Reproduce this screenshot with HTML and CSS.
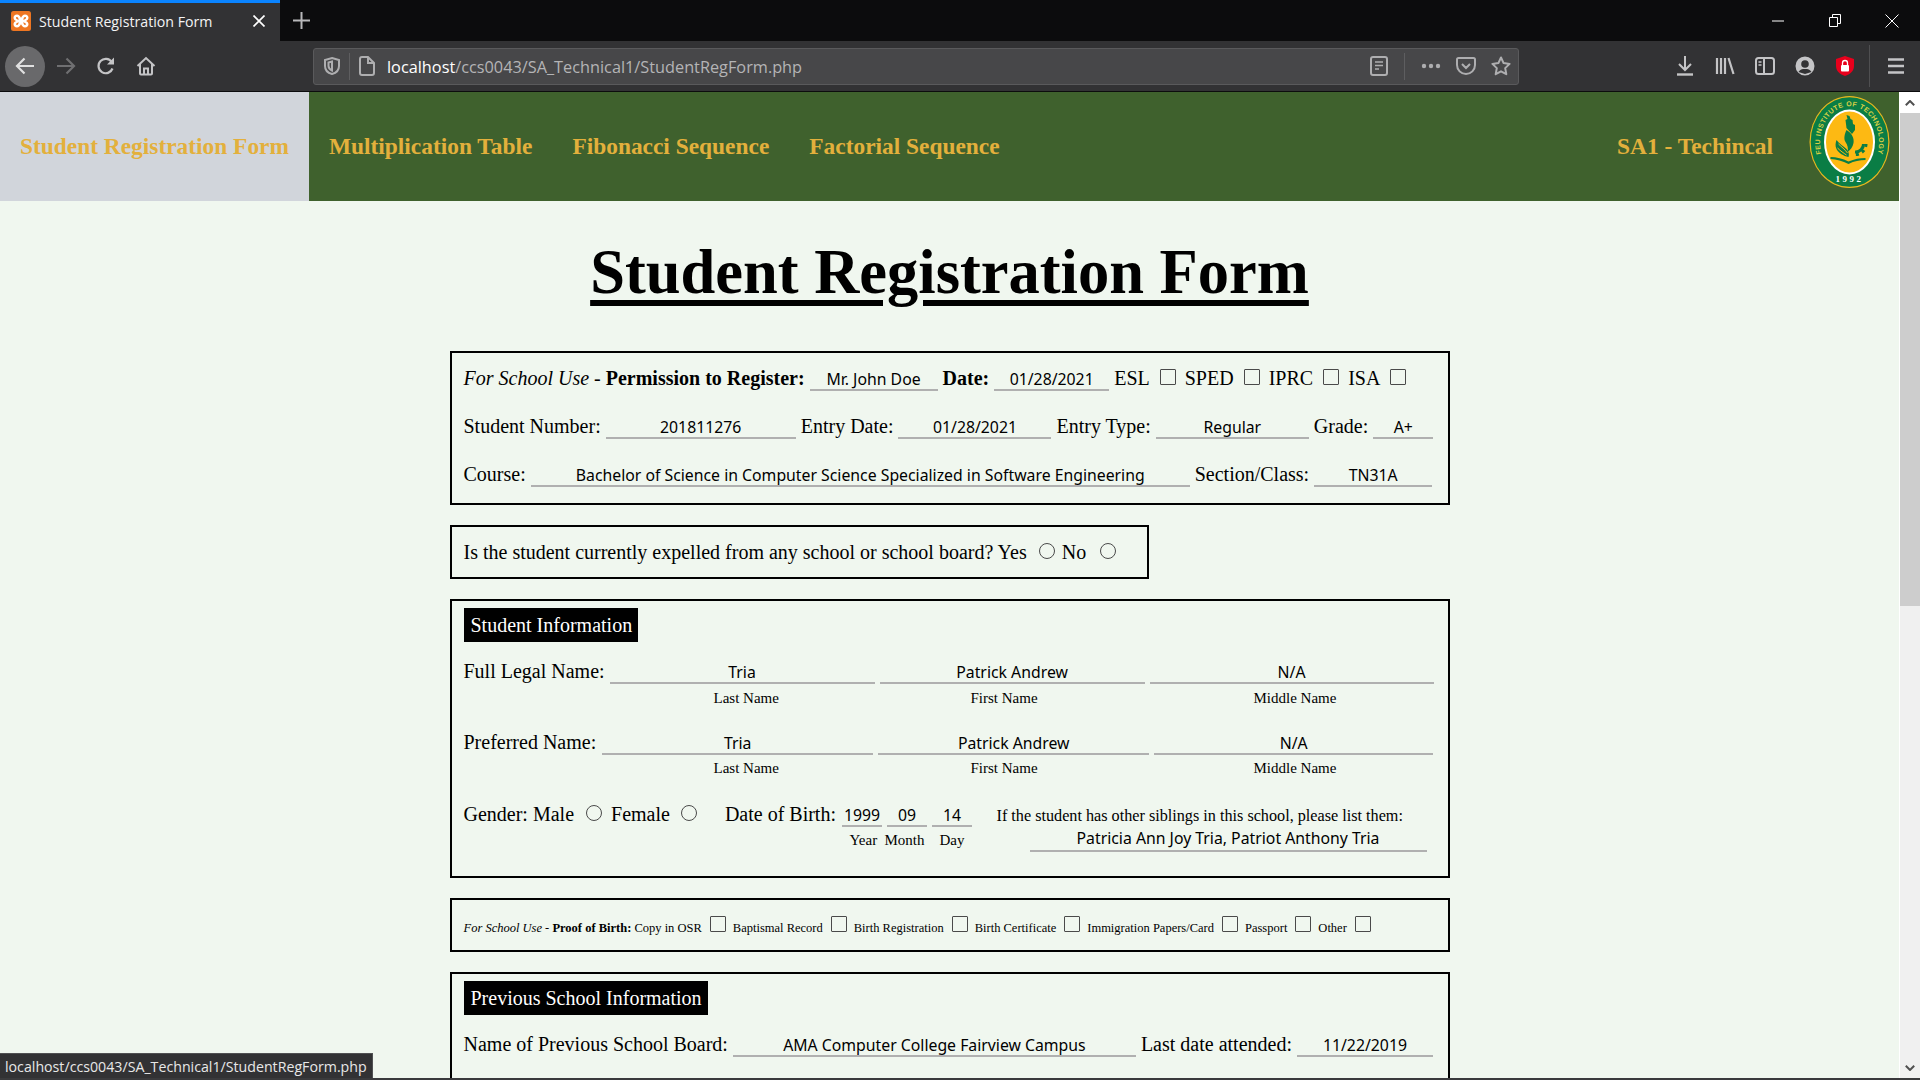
FILE: index.html
```html
<!DOCTYPE html>
<html lang="en">
<head>
<meta charset="utf-8">
<title>Student Registration Form</title>
<link rel="stylesheet" href="styles.css">
</head>
<body>
<header class="chrome">
  <div class="tabstrip">
    <div class="tab">
      <svg class="favicon" viewBox="0 0 20 20"><rect width="20" height="20" rx="2.5" fill="#ee7622"/><path d="M6 3.5c2 0 3 1.5 4 3.2 1-1.7 2-3.2 4-3.2 2.2 0 3.5 1.4 3.5 3.2 0 1.5-1 2.6-2.6 3.3 1.6.7 2.6 1.8 2.6 3.3 0 1.8-1.3 3.2-3.5 3.2-2 0-3-1.5-4-3.2-1 1.7-2 3.2-4 3.2-2.2 0-3.5-1.4-3.5-3.2 0-1.5 1-2.6 2.6-3.3C3.500 9.300 2.500 8.200 2.500 6.700c0-1.800 1.300-3.200 3.500-3.200z" fill="#fff"/><path d="M6 6c-.8 0-1 .5-1 .9 0 .7 1 1.300 2.800 1.900C7.400 7.300 6.900 6 6 6zM14 6c.8 0 1 .5 1 .9 0 .7-1 1.300-2.800 1.900.4-1.500.9-2.800 1.800-2.800zM6 14c-.8 0-1-.5-1-.9 0-.7 1-1.300 2.800-1.900C7.400 12.700 6.900 14 6 14zM14 14c.8 0 1-.5 1-.9 0-.7-1-1.300-2.800-1.900.4 1.500.9 2.800 1.800 2.800z" fill="#ee7622"/></svg>
      <span class="tab-title">Student Registration Form</span>
      <svg class="tab-close" viewBox="0 0 12 12"><path d="M.5.500l11 11M11.500.500l-11 11" stroke="#fff" stroke-width="1.700" fill="none"/></svg>
    </div>
    <svg class="newtab" viewBox="0 0 17 17"><path d="M8.500 0v17M0 8.500h17" stroke="#b8b8ba" stroke-width="2" fill="none"/></svg>
    <div class="winctl">
      <svg class="win-min" viewBox="0 0 12 2"><path d="M0 1h12" stroke="#fff" stroke-width="1"/></svg>
      <svg class="win-max" viewBox="0 0 12 13"><path d="M.5 3.500h8v9h-8zM3.500 3.500v-3h8v9h-3" stroke="#fff" fill="none"/></svg>
      <svg class="win-close" viewBox="0 0 14 14"><path d="M.5.500l13 13M13.500.500l-13 13" stroke="#fff" fill="none"/></svg>
    </div>
  </div>
  <div class="toolbar">
    <div class="back"><svg class="ico" viewBox="0 0 20 20"><path d="M19 10H2M9.500 2.500L2 10l7.500 7.500" stroke="#e0e0e0" stroke-width="2.200" fill="none"/></svg></div>
    <svg class="ico fwd" viewBox="0 0 20 20"><path d="M1 10h17M10.500 2.500L18 10l-7.500 7.500" stroke="#6f6f71" stroke-width="2.200" fill="none"/></svg>
    <svg class="ico gap20" viewBox="0 0 20 20"><path d="M16.500 12.500a7.200 7.200 0 1 1-.8-6.500" stroke="#c4c4c6" stroke-width="2.200" fill="none"/><path d="M18 1.500v7h-7z" fill="#c4c4c6"/></svg>
    <svg class="ico gap20" viewBox="0 0 20 20"><path d="M1.500 10L10 2l8.500 8M4 8v9.500a1 1 0 0 0 1 1h10a1 1 0 0 0 1-1V8M8 18.500v-6h4v6" stroke="#c4c4c6" stroke-width="2" fill="none"/></svg>
    <div class="urlbar">
      <svg class="ico-s" viewBox="0 0 18 18"><path d="M9 1l7 2v6c0 4-3 7-7 8-4-1-7-4-7-8V3zM9 4.500L5.500 5.500V9c0 2 1.500 3.500 3.500 4.500z" stroke="#aeaeb0" stroke-width="2" fill="none"/></svg>
      <span class="url-sep"></span>
      <svg class="ico-s" viewBox="0 0 18 20"><path d="M2 3a2 2 0 0 1 2-2h6l6 6v10a2 2 0 0 1-2 2H4a2 2 0 0 1-2-2zM10 1v6h6" stroke="#aeaeb0" stroke-width="2" fill="none"/></svg>
      <span class="url-text"><span class="url-host">localhost</span>/ccs0043/SA_Technical1/StudentRegForm.php</span>
      <svg class="ico-s" viewBox="0 0 18 20"><rect x="1" y="1" width="16" height="18" rx="2" stroke="#aeaeb0" stroke-width="2" fill="none"/><path d="M5 6h8M5 9.500h8M5 13h4" stroke="#aeaeb0" stroke-width="1.600"/></svg>
      <span class="url-sep url-sep-r"></span>
      <svg class="ico dots" viewBox="0 0 20 20"><circle cx="3" cy="10" r="2.200" fill="#aeaeb0"/><circle cx="10" cy="10" r="2.200" fill="#aeaeb0"/><circle cx="17" cy="10" r="2.200" fill="#aeaeb0"/></svg>
      <svg class="ico gap15" viewBox="0 0 20 20"><path d="M2.500 2h15a1.500 1.500 0 0 1 1.500 1.500V9c0 5-4 9-9 9s-9-4-9-9V3.500A1.500 1.500 0 0 1 2.500 2zM6 8l4 4 4-4" stroke="#aeaeb0" stroke-width="2" fill="none"/></svg>
      <svg class="ico gap15" viewBox="0 0 20 20"><path d="M10 1.500l2.600 5.600 6 .8-4.400 4.200 1.100 6.100L10 15.300l-5.300 2.900 1.100-6.100-4.400-4.200 6-.8z" stroke="#aeaeb0" stroke-width="2" fill="none" stroke-linejoin="round"/></svg>
    </div>
    <svg class="ico dl" viewBox="0 0 20 20"><path d="M10 0v13M4 8l6 6 6-6" stroke="#c4c4c6" stroke-width="2" fill="none"/><path d="M2 18.500h16" stroke="#c4c4c6" stroke-width="2.400"/></svg>
    <svg class="ico gap20" viewBox="0 0 20 20"><path d="M2 2v16M6 2v16M10 2v16M13.500 2l5 16" stroke="#c4c4c6" stroke-width="2.200" fill="none"/></svg>
    <svg class="ico gap20" viewBox="0 0 20 20"><rect x="1" y="2" width="18" height="16" rx="2.500" stroke="#c4c4c6" stroke-width="2" fill="none"/><path d="M9 2v16" stroke="#c4c4c6" stroke-width="2"/><path d="M3.500 6h3M3.500 9h3" stroke="#c4c4c6" stroke-width="1.500"/></svg>
    <svg class="ico gap20" viewBox="0 0 20 20"><circle cx="10" cy="10" r="8.500" stroke="#c4c4c6" stroke-width="2" fill="#c4c4c6"/><circle cx="10" cy="8" r="3.800" fill="#323234"/><path d="M3.500 16c1.500-2.500 3.500-3 6.500-3s5 .5 6.500 3L10 18z" fill="#323234"/></svg>
    <svg class="ico gap20" viewBox="0 0 20 20"><path d="M10 0l9 3v7c0 5-4 8.500-9 10-5-1.500-9-5-9-10V3z" fill="#e8001c"/><rect x="6" y="9" width="8" height="6.500" rx="1" fill="#fff"/><path d="M7.500 9V7a2.500 2.500 0 0 1 5 0v2" stroke="#fff" stroke-width="1.300" fill="none"/></svg>
    <span class="tool-sep"></span>
    <svg class="ico burger" viewBox="0 0 20 20"><path d="M2 3.500h16M2 10h16M2 16.500h16" stroke="#c4c4c6" stroke-width="2.600"/></svg>
  </div>
</header>

<div class="viewport">
  <main class="page">
    <nav class="nav">
      <a class="nav-item nav-active nav-reg">Student Registration Form</a>
      <a class="nav-item nav-mul">Multiplication Table</a>
      <a class="nav-item nav-fib">Fibonacci Sequence</a>
      <a class="nav-item nav-fac">Factorial Sequence</a>
      <a class="nav-item nav-sa">SA1 - Techincal</a>
      <svg class="logo" viewBox="0 0 80 92">
        <ellipse cx="40" cy="46" rx="40" ry="46" fill="#e9b81e"/>
        <ellipse cx="40" cy="46" rx="38.800" ry="44.800" fill="#0a7d45"/>
        <ellipse cx="40" cy="46" rx="25.500" ry="32.500" fill="#fff"/>
        <ellipse cx="40" cy="46" rx="23.500" ry="30.500" fill="#fdb913"/>
        <path id="logoArc" d="M16 68A29.500 36.500 0 1 1 64 68" fill="none"/>
        <text class="logo-arc"><textPath href="#logoArc" startOffset="50%" text-anchor="middle">FEU INSTITUTE OF TECHNOLOGY</textPath></text>
        <text class="logo-year" x="40" y="86" text-anchor="middle">1992</text>
        <path d="M37 32l-1-8 2-1-1-4 3 1 1 3 2 1 .5 4 2 1v5l-3 4z" fill="#0a7d45"/>
        <circle cx="46" cy="48" r="8" fill="none" stroke="#0a7d45" stroke-width="3" stroke-dasharray="25 50" stroke-dashoffset="12"/>
        <circle cx="46" cy="48" r="10.500" fill="none" stroke="#0a7d45" stroke-width="3" stroke-dasharray="3 3.500 3 3.500 3 3.500 3 3.500 3 50" stroke-dashoffset="13"/>
        <path d="M37 34c5 3 8 8 7 13-.7 4-3 7-6 9 1-4 0-7-2-10-2-3-1-8 1-12z" fill="#0a7d45"/>
        <path d="M27 44c3 4 7 6 10 9 2 2 3 5 2 8-5-1-10-4-12-8-1.500-3-1-6 0-9z" fill="#0a7d45"/>
        <path d="M29 48c3 3 6 5 9 9M28 52c3 3 6 5 9 7" stroke="#fdb913" stroke-width="1" fill="none"/>
        <path d="M21 61c6 0 12 1.500 18 4.500 6-2.500 11-3.500 17-3.500v2c-6 0-11 1-17 4-6-3-12-4.500-18-5z" fill="#0a7d45"/>
      </svg>
    </nav>

    <div class="content">
      <h1 class="title">Student Registration Form</h1>

      <section class="box box-use">
        <div class="line">
          <span><i>For School Use</i> - <b>Permission to Register:</b></span>
          <span class="field w128">Mr. John Doe</span>
          <b>Date:</b>
          <span class="field w115">01/28/2021</span>
          <span>ESL</span><input class="check" type="checkbox">
          <span>SPED</span><input class="check" type="checkbox">
          <span>IPRC</span><input class="check" type="checkbox">
          <span>ISA</span><input class="check" type="checkbox">
        </div>
        <div class="line">
          <span>Student Number:</span><span class="field w190">201811276</span>
          <span>Entry Date:</span><span class="field w153">01/28/2021</span>
          <span>Entry Type:</span><span class="field w153">Regular</span>
          <span>Grade:</span><span class="field w60">A+</span>
        </div>
        <div class="line">
          <span>Course:</span><span class="field w659">Bachelor of Science in Computer Science Specialized in Software Engineering</span>
          <span>Section/Class:</span><span class="field w118">TN31A</span>
        </div>
      </section>

      <section class="box box-expelled">
        <div class="line">
          <span>Is the student currently expelled from any school or school board? Yes</span>
          <input class="radio" type="radio" name="expelled">
          <span>No</span>
          <input class="radio radio-no" type="radio" name="expelled">
        </div>
      </section>

      <section class="box box-info">
        <h2 class="band">Student Information</h2>
        <div class="line line-tall">
          <span>Full Legal Name:</span>
          <span class="field w265">Tria</span>
          <span class="field w265">Patrick Andrew</span>
          <span class="field w284">N/A</span>
        </div>
        <div class="subrow">
          <span class="sub-last">Last Name</span><span class="sub-first">First Name</span><span>Middle Name</span>
        </div>
        <div class="line line-tall line-second">
          <span>Preferred Name:</span>
          <span class="field w271 nudge">Tria</span>
          <span class="field w271">Patrick Andrew</span>
          <span class="field w279">N/A</span>
        </div>
        <div class="subrow">
          <span class="sub-last">Last Name</span><span class="sub-first">First Name</span><span>Middle Name</span>
        </div>
        <div class="bio">
          <div class="bio-left">
            <div class="line line-tall">
              <span>Gender: Male</span>
              <input class="radio radio-gender" type="radio" name="gender">
              <span>Female</span>
              <input class="radio radio-female" type="radio" name="gender">
              <span>Date of Birth:</span>
              <span class="field w40 nudge">1999</span>
              <span class="field w40">09</span>
              <span class="field w40">14</span>
            </div>
            <div class="subrow subrow-dob">
              <span class="sub-year">Year</span><span class="sub-month">Month</span><span>Day</span>
            </div>
          </div>
          <div class="bio-right">
            <div class="sibling-text">If the student has other siblings in this school, please list them:</div>
            <span class="field w397 sibling-field">Patricia Ann Joy Tria, Patriot Anthony Tria</span>
          </div>
        </div>
      </section>

      <section class="box box-proof">
        <div class="line line-small">
          <span><i>For School Use</i> - <b>Proof of Birth:</b> Copy in OSR</span><input class="check check-small" type="checkbox">
          <span>Baptismal Record</span><input class="check check-small" type="checkbox">
          <span>Birth Registration</span><input class="check check-small" type="checkbox">
          <span>Birth Certificate</span><input class="check check-small" type="checkbox">
          <span>Immigration Papers/Card</span><input class="check check-small" type="checkbox">
          <span>Passport</span><input class="check check-small" type="checkbox">
          <span>Other</span><input class="check check-small" type="checkbox">
        </div>
      </section>

      <section class="box box-prev">
        <h2 class="band">Previous School Information</h2>
        <div class="line line-tall">
          <span>Name of Previous School Board:</span>
          <span class="field w403">AMA Computer College Fairview Campus</span>
          <span>Last date attended:</span>
          <span class="field w136">11/22/2019</span>
        </div>
      </section>
    </div>
  </main>
  <aside class="scrollbar">
    <div class="sb-btn sb-up"><svg class="sb-arrow" viewBox="0 0 10 6"><path d="M.8 5.200L5 1l4.200 4.200" stroke="#505050" stroke-width="2" fill="none"/></svg></div>
    <div class="sb-thumb"></div>
    <div class="sb-btn sb-down"><svg class="sb-arrow" viewBox="0 0 10 6"><path d="M.8.800L5 5 9.200.800" stroke="#505050" stroke-width="2" fill="none"/></svg></div>
  </aside>
  <div class="status">localhost/ccs0043/SA_Technical1/StudentRegForm.php</div>
</div>
<div class="bottom-edge"></div>
</body>
</html>
```

FILE: styles.css
```css
* { box-sizing: border-box; }
html, body { margin: 0; height: 100%; overflow: hidden; }
body {
  display: flex;
  flex-direction: column;
  height: 1080px;
  font-family: "Liberation Serif", "Times New Roman", serif;
  font-size: 20px;
  color: #000;
  background: #f0f7ef;
}

/* browser chrome */
.chrome { flex: none; font-family: "Open Sans", "Noto Sans", sans-serif; }
.tabstrip { display: flex; align-items: center; height: 41px; background: #0c0c0d; }
.tab {
  display: flex; align-items: center; width: 280px; height: 41px;
  background: #323234; border-top: 3px solid #0a84ff; padding: 0 0 2px 11px;
}
.favicon { width: 20px; height: 20px; }
.tab-title { margin-left: 8px; width: 214px; color: #f4f4f4; font-size: 14.200px; white-space: nowrap; }
.tab-close { width: 12px; height: 12px; }
.newtab { width: 17px; height: 17px; margin-left: 13px; }
.winctl { margin-left: auto; display: flex; align-items: center; padding-right: 21px; }
.win-min { width: 12px; height: 2px; }
.win-max { width: 12px; height: 13px; margin-left: 45px; }
.win-close { width: 14px; height: 14px; margin-left: 44px; }

.toolbar {
  display: flex; align-items: center; height: 51px;
  background: #323234; border-bottom: 1px solid #0c0c0d; padding-left: 5px;
}
.back {
  width: 40px; height: 41px; border-radius: 50%; background: #69696b;
  display: flex; align-items: center; justify-content: center;
}
.ico { width: 20px; height: 20px; flex: none; }
.ico-s { width: 18px; height: 20px; flex: none; }
.fwd { margin-left: 11px; }
.gap20 { margin-left: 20px; }
.gap15 { margin-left: 15px; }
.urlbar {
  display: flex; align-items: center; height: 37px; width: 1206px; margin-left: 157px;
  background: #474749; border: 1px solid #5a5a5c; border-radius: 3px; padding: 0 7px 0 9px;
}
.url-sep { width: 1px; height: 27px; background: #5e5e60; margin: 0 8px; flex: none; }
.url-text { margin-left: 11px; padding-top: 2px; flex: 1; color: #b4b4b6; font-size: 16.300px; white-space: nowrap; }
.url-host { color: #fff; }
.url-sep-r { margin: 0 16px 0 16px; }
.dl { margin-left: 156px; }
.tool-sep { width: 1px; height: 42px; background: #4f4f51; margin-left: 14px; flex: none; }
.burger { margin-left: 16px; }

/* page */
.viewport { position: relative; flex: 1; display: flex; min-height: 0; }
.page { flex: 1; min-width: 0; overflow: hidden; }
.nav { display: flex; align-items: stretch; height: 109px; background: #3f612d; }
.nav-item {
  display: flex; align-items: center; padding: 0 20px;
  color: #e3b03c; font-size: 23.400px; font-weight: bold; white-space: nowrap;
}
.nav-active { background: #d1d5db; }
.nav-sa { margin-left: auto; }
.logo { width: 81px; height: 92px; margin: 4px 9px 13px 16px; flex: none; }
.logo-arc { font-family: "Liberation Sans", sans-serif; font-size: 7px; font-weight: bold; fill: #d8cf45; letter-spacing: .4px; }
.logo-year { font-family: "Liberation Serif", serif; font-size: 9px; font-weight: bold; fill: #fff; letter-spacing: 2.500px; }

.content { width: 1000px; margin: 0 auto; }
.title {
  margin: 33px 0 40px;
  text-align: center; font-size: 62.500px; line-height: 77px; font-weight: bold;
  text-decoration: underline; text-decoration-thickness: 6px; text-underline-offset: 7px;
}
.box { border: 2px solid #000; padding: 0 12px; margin-bottom: 20px; }
.box-use { padding-top: 1px; padding-bottom: 5px; }
.box-expelled { width: 699px; height: 54px; padding-top: 1px; }
.box-info { padding-top: 7px; padding-bottom: 24px; }
.box-proof { height: 54px; padding-top: 6px; }
.box-prev { padding-top: 7px; height: 300px; }

.band {
  display: table; margin: 0; padding: 0 6px 0 7px; height: 34px; line-height: 34px;
  background: #000; color: #fff; font-size: 20px; font-weight: normal;
}
.line { display: flex; align-items: baseline; gap: 5px; height: 48px; line-height: 48px; white-space: nowrap; }
.line-tall { height: 36px; line-height: 36px; margin-top: 11px; }
.line-second { margin-top: 17px; height: 35px; }
.line-small { height: 44px; line-height: 44px; gap: 0; font-size: 12.500px; }

.field {
  display: block; flex: none; text-align: center; border-bottom: 2px solid #b0b0b0;
  font-family: "Noto Sans", "Open Sans", sans-serif; font-size: 15.800px; line-height: 20px; white-space: nowrap;
}
.nudge { margin-left: 1px; }
.w40 { width: 40px; } .w60 { width: 60px; } .w115 { width: 115px; } .w118 { width: 118px; }
.w128 { width: 128px; } .w136 { width: 136px; } .w153 { width: 153px; }
.w190 { width: 190px; } .w265 { width: 265px; } .w271 { width: 271px; } .w279 { width: 279px; }
.w284 { width: 284px; } .w397 { width: 397px; } .w403 { width: 403px; } .w659 { width: 659px; }

.check, .radio {
  appearance: none; -webkit-appearance: none; display: block; flex: none;
  width: 16px; height: 16px; padding: 0; background: transparent;
  border: 1px solid #4a4a4a;
}
.check { margin: 0 4px 0 5px; border-radius: 1px; }
.check-small { margin: 0 7px 0 8px; }
.radio { margin: 0 2px 0 7px; border-radius: 50%; }
.radio-no { margin-left: 9px; }
.radio-gender { margin-right: 4px; }
.radio-female { margin: 0 23px 0 6px; }

.subrow { display: flex; height: 18px; line-height: 18px; font-size: 15px; padding-left: 250px; white-space: nowrap; }
.sub-last { width: 257px; }
.sub-first { width: 283px; }
.bio { display: flex; margin-top: 19px; }
.bio .line-tall { margin-top: 0; }
.bio-left { width: 533px; flex: none; }
.subrow-dob { padding-left: 386px; margin-top: -1px; }
.sub-year { width: 35px; }
.sub-month { width: 55px; }
.bio-right { flex: 1; min-width: 0; }
.sibling-text { padding-top: 8px; font-size: 16.200px; line-height: 24px; white-space: nowrap; }
.sibling-field { margin-left: 33px; padding-bottom: 2px; }

/* scrollbar */
.scrollbar { flex: none; width: 21px; display: flex; flex-direction: column; background: #f0f0f0; border-left: 1px solid #fff; }
.sb-btn { height: 21px; display: flex; align-items: center; justify-content: center; flex: none; }
.sb-up { background: #fff; }
.sb-thumb { height: 493px; background: #cdcdcd; flex: none; }
.sb-down { margin-top: auto; }
.sb-arrow { width: 10px; height: 6px; }

.status {
  position: absolute; left: 0; bottom: 0; width: 373px; height: 25px; line-height: 26px; padding-left: 5px;
  background: #323234; border-top: 1px solid #505052; border-right: 1px solid #505052;
  color: #e8e8e8; font-family: "Open Sans", "Noto Sans", sans-serif; font-size: 14.200px; white-space: nowrap;
}
.bottom-edge { height: 2px; flex: none; background: #3a3a3c; }
```
